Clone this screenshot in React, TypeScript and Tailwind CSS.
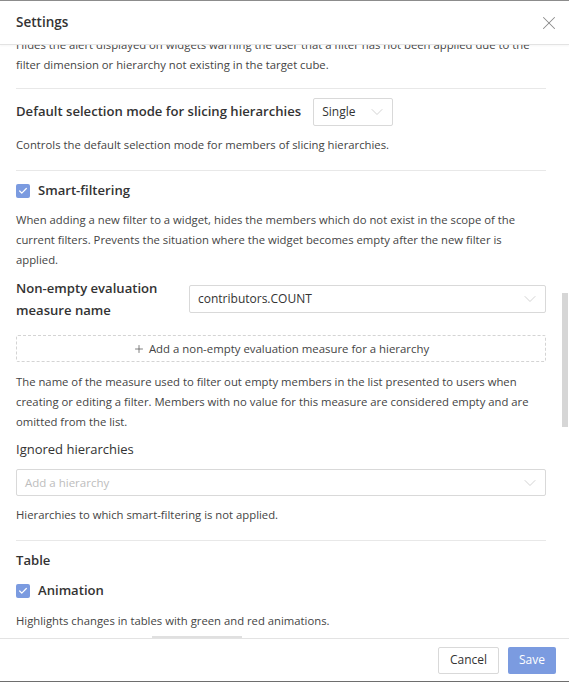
import { Check, ChevronDown, Plus, X } from 'lucide-react'

function CheckBox() {
  return (
    <span className="flex items-center justify-center w-[14px] h-[14px] rounded-[2px] bg-[#7b9be0]">
      <Check className="w-[10px] h-[10px] text-white" strokeWidth={3} />
    </span>
  )
}

function SelectBox({ value, placeholder, className }: { value?: string; placeholder?: string; className: string }) {
  return (
    <div className={`flex items-center justify-between border border-[#d9d9d9] rounded-[2px] bg-white pl-[8px] pr-[5px] ${className}`}>
      {value
        ? <span className="text-[12px] text-[#333]">{value}</span>
        : <span className="text-[11.5px] text-[#bdbdbd]">{placeholder}</span>}
      <ChevronDown className="w-[20px] h-[20px] text-[#c4c4c4]" strokeWidth={0.9} />
    </div>
  )
}

export default function App() {
  return (
    <div className="w-[569px] h-[684px] bg-white flex flex-col overflow-hidden font-['Open_Sans',sans-serif] text-[#333]">
      <div className="h-[45px] shrink-0 border-t border-[#8c8c8c] border-b border-b-[#e3e3e3] flex items-center justify-between pl-4 pr-[9px] shadow-[0_1px_2px_rgba(0,0,0,0.04)]">
        <span className="text-[13.5px] font-semibold text-[#333]">Settings</span>
        <X className="w-[22px] h-[22px] text-[#8a8a8a]" strokeWidth={1.1} />
      </div>

      <div className="relative flex-1 overflow-hidden">
        <div className="pl-4 pr-[23px] -mt-[10px]">
          <div className="border-b border-[#e8e8e8] pb-[13px]">
            <p className="text-[11.3px] leading-[20px] text-[#444]">
              Hides the alert displayed on widgets warning the user that a filter has not been applied due to the
              <br />
              filter dimension or hierarchy not existing in the target cube.
            </p>
          </div>

          <div className="border-b border-[#e8e8e8] pt-[9px] pb-[15px]">
            <div className="flex items-center gap-[12px] h-[28px]">
              <span className="text-[13.1px] font-semibold">Default selection mode for slicing hierarchies</span>
              <SelectBox value="Single" className="w-[80px] h-[28px]" />
            </div>
            <p className="mt-[9px] text-[11.3px] leading-[20px] text-[#444]">
              Controls the default selection mode for members of slicing hierarchies.
            </p>
          </div>

          <div className="border-b border-[#e8e8e8] pt-[10px] pb-[15px]">
            <div className="flex items-center gap-[8px] h-[20px]">
              <CheckBox />
              <span className="text-[13.1px] font-semibold">Smart-filtering</span>
            </div>
            <p className="mt-[9px] text-[11.3px] leading-[20px] text-[#444]">
              When adding a new filter to a widget, hides the members which do not exist in the scope of the
              <br />
              current filters. Prevents the situation where the widget becomes empty after the new filter is
              <br />
              applied.
            </p>
            <div className="mt-[7px] flex items-center">
              <span className="w-[173px] text-[13.1px] font-semibold leading-[22px]">
                Non-empty evaluation
                <br />
                measure name
              </span>
              <SelectBox value="contributors.COUNT" className="flex-1 h-[28px]" />
            </div>
            <div className="mt-[14px] h-[27px] border border-dashed border-[#d4d4d4] rounded-[2px] flex items-center justify-center gap-[4px]">
              <Plus className="w-[12px] h-[12px] text-[#555]" strokeWidth={1.5} />
              <span className="text-[11.4px] text-[#444]">Add a non-empty evaluation measure for a hierarchy</span>
            </div>
            <p className="mt-[10px] text-[11.3px] leading-[20px] text-[#444]">
              The name of the measure used to filter out empty members in the list presented to users when
              <br />
              creating or editing a filter. Members with no value for this measure are considered empty and are
              <br />
              omitted from the list.
            </p>
            <div className="mt-[8px] h-[20px] flex items-center text-[13px] font-medium">Ignored hierarchies</div>
            <SelectBox placeholder="Add a hierarchy" className="mt-[9px] h-[27px]" />
            <p className="mt-[9px] text-[11.3px] leading-[20px] text-[#444]">
              Hierarchies to which smart-filtering is not applied.
            </p>
          </div>

          <div className="pt-[10px]">
            <div className="h-[20px] flex items-center text-[13.1px] font-semibold">Table</div>
            <div className="mt-[10px] flex items-center gap-[8px] h-[20px]">
              <CheckBox />
              <span className="text-[13.1px] font-semibold">Animation</span>
            </div>
            <p className="mt-[10px] text-[11.3px] leading-[20px] text-[#444]">
              Highlights changes in tables with green and red animations.
            </p>
            <div className="mt-[5px] ml-[136px] w-[90px] h-[24px] border-t-2 border-[#e0e0e0]" />
          </div>
        </div>

        <div className="absolute right-[1px] top-[248px] w-[6px] h-[134px] bg-[#d6d6d6]" />
      </div>

      <div className="h-[43px] shrink-0 border-t border-[#e3e3e3] flex items-center justify-end gap-[9px] pr-[13px]">
        <button className="h-[27px] px-[11px] border border-[#d9d9d9] rounded-[2px] bg-white text-[12px] text-[#333]">Cancel</button>
        <button className="h-[27px] px-[11px] rounded-[2px] bg-[#7b9be0] text-[12px] text-white">Save</button>
      </div>
      <div className="h-[3px] shrink-0 border-t border-[#6e6e6e] bg-white" />
    </div>
  )
}
